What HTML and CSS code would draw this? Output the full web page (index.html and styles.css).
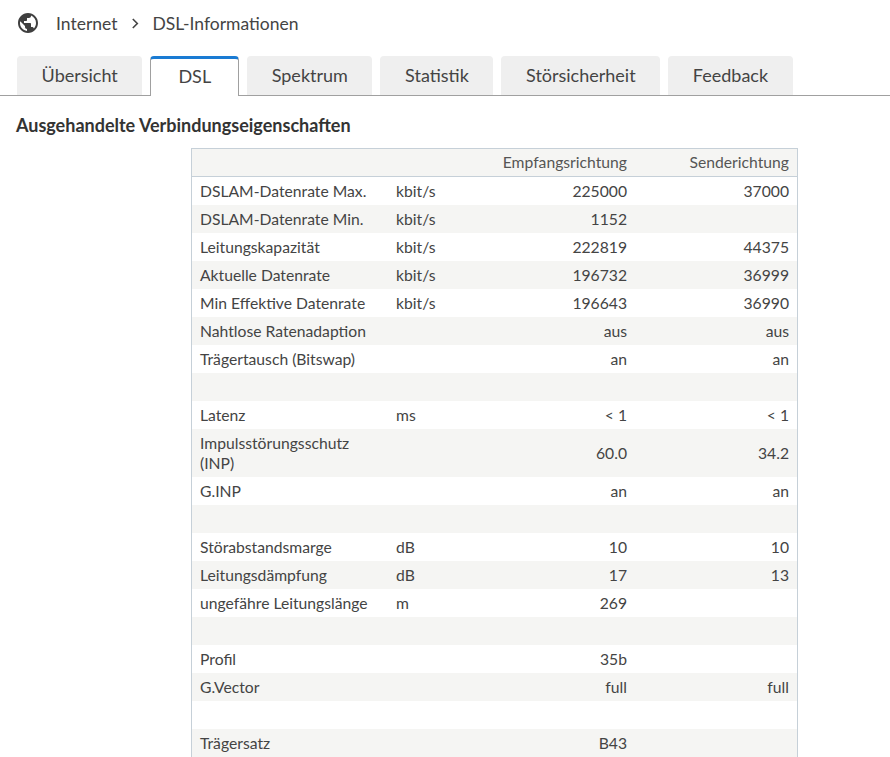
FILE: index.html
```html
<!DOCTYPE html>
<html lang="de">
<head>
<meta charset="utf-8">
<title>DSL-Informationen</title>
<link rel="stylesheet" href="styles.css">
</head>
<body>
<nav class="crumbs">
  <svg class="globe" viewBox="2 2 20 20" width="20" height="20"><path fill="currentColor" d="M12 2C6.48 2 2 6.48 2 12s4.48 10 10 10 10-4.48 10-10S17.52 2 12 2zm-1 17.930c-3.95-.49-7-3.85-7-7.93 0-.62.08-1.21.21-1.79L9 15v1c0 1.1.9 2 2 2v1.93zm6.9-2.54c-.26-.81-1-1.39-1.9-1.39h-1v-3c0-.55-.45-1-1-1H8v-2h2c.55 0 1-.45 1-1V7h2c1.1 0 2-.9 2-2v-.41c2.93 1.19 5 4.06 5 7.41 0 2.08-.8 3.97-2.1 5.39z"/></svg>
  <span class="crumb">Internet</span>
  <svg class="chev" viewBox="0 0 10 14" width="9" height="13"><path d="M2 2l5 5-5 5" fill="none" stroke="currentColor" stroke-width="1.8"/></svg>
  <span class="crumb">DSL-Informationen</span>
</nav>

<div class="tabs">
  <div class="tab">Übersicht</div>
  <div class="tab active">DSL</div>
  <div class="tab">Spektrum</div>
  <div class="tab">Statistik</div>
  <div class="tab">Störsicherheit</div>
  <div class="tab">Feedback</div>
</div>

<main class="content">
  <h2 class="title">Ausgehandelte Verbindungseigenschaften</h2>
  <table class="dsl">
    <colgroup><col class="c1"><col class="c2"><col class="c3"><col class="c4"></colgroup>
    <thead>
      <tr><th></th><th></th><th class="num">Empfangsrichtung</th><th class="num">Senderichtung</th></tr>
    </thead>
    <tbody>
      <tr><td>DSLAM-Datenrate Max.</td><td>kbit/s</td><td class="num">225000</td><td class="num">37000</td></tr>
      <tr><td>DSLAM-Datenrate Min.</td><td>kbit/s</td><td class="num">1152</td><td class="num"></td></tr>
      <tr><td>Leitungskapazität</td><td>kbit/s</td><td class="num">222819</td><td class="num">44375</td></tr>
      <tr><td>Aktuelle Datenrate</td><td>kbit/s</td><td class="num">196732</td><td class="num">36999</td></tr>
      <tr><td>Min Effektive Datenrate</td><td>kbit/s</td><td class="num">196643</td><td class="num">36990</td></tr>
      <tr><td>Nahtlose Ratenadaption</td><td></td><td class="num">aus</td><td class="num">aus</td></tr>
      <tr><td>Trägertausch (Bitswap)</td><td></td><td class="num">an</td><td class="num">an</td></tr>
      <tr class="empty"><td></td><td></td><td></td><td></td></tr>
      <tr><td>Latenz</td><td>ms</td><td class="num">&lt; 1</td><td class="num">&lt; 1</td></tr>
      <tr><td>Impulsstörungsschutz (INP)</td><td></td><td class="num">60.0</td><td class="num">34.2</td></tr>
      <tr><td>G.INP</td><td></td><td class="num">an</td><td class="num">an</td></tr>
      <tr class="empty"><td></td><td></td><td></td><td></td></tr>
      <tr><td>Störabstandsmarge</td><td>dB</td><td class="num">10</td><td class="num">10</td></tr>
      <tr><td>Leitungsdämpfung</td><td>dB</td><td class="num">17</td><td class="num">13</td></tr>
      <tr><td>ungefähre Leitungslänge</td><td>m</td><td class="num">269</td><td class="num"></td></tr>
      <tr class="empty"><td></td><td></td><td></td><td></td></tr>
      <tr><td>Profil</td><td></td><td class="num">35b</td><td class="num"></td></tr>
      <tr><td>G.Vector</td><td></td><td class="num">full</td><td class="num">full</td></tr>
      <tr class="empty"><td></td><td></td><td></td><td></td></tr>
      <tr><td>Trägersatz</td><td></td><td class="num">B43</td><td class="num"></td></tr>
    </tbody>
  </table>
</main>
</body>
</html>
```

FILE: styles.css
```css
html, body {
  margin: 0;
  padding: 0;
  background: #fff;
}
body {
  font-family: Lato, "Open Sans", "Liberation Sans", sans-serif;
  color: #444;
  width: 890px;
  overflow: hidden;
}

.crumbs {
  display: flex;
  align-items: center;
  height: 46px;
  padding-left: 18px;
  font-size: 17.5px;
}
.globe {
  color: #3f3f3f;
  margin-right: 18px;
}
.chev {
  color: #444;
  margin: 1px 12px 0 14px;
}
.crumb {
  color: #444;
}

.tabs {
  display: flex;
  gap: 8px;
  margin-top: 10px;
  padding-left: 17px;
  border-bottom: 1px solid #a0a0a0;
  height: 39px;
}
.tab {
  background: #efefef;
  border-radius: 4px 4px 0 0;
  font-size: 18px;
  line-height: 39px;
  height: 39px;
  padding: 0 24.6px;
  color: #444;
  box-sizing: border-box;
}
.tab.active {
  background: #fff;
  border: 1px solid #a0a0a0;
  border-top: 3px solid #1a7bd3;
  border-bottom: none;
  height: 40px;
  line-height: 35px;
  padding: 0 27px;
}

.content {
  padding-left: 16px;
}
.title {
  font-size: 18px;
  font-weight: 700;
  color: #333;
  line-height: 22px;
  margin: 18px 0 12px;
}

.dsl {
  margin-left: 175px;
  width: 607px;
  table-layout: fixed;
  border-collapse: separate;
  border-spacing: 0;
  border: 1px solid #c6d0d8;
  font-size: 15.7px;
}
.c1 { width: 196px; }
.c2 { width: 94px; }
.c3 { width: 153px; }
.c4 { width: 162px; }

.dsl th, .dsl td {
  padding: 4px 8px;
  line-height: 20px;
  text-align: left;
  vertical-align: middle;
  font-weight: 400;
}
.dsl th {
  background: #f5f5f3;
  border-bottom: 1px solid #c6d0d8;
  color: #555;
  padding: 3px 8px 4px;
}
.dsl .num {
  text-align: right;
}
.dsl tbody tr:nth-child(even) td {
  background: #f5f5f3;
}
.dsl tr.empty td {
  height: 20px;
}
```
